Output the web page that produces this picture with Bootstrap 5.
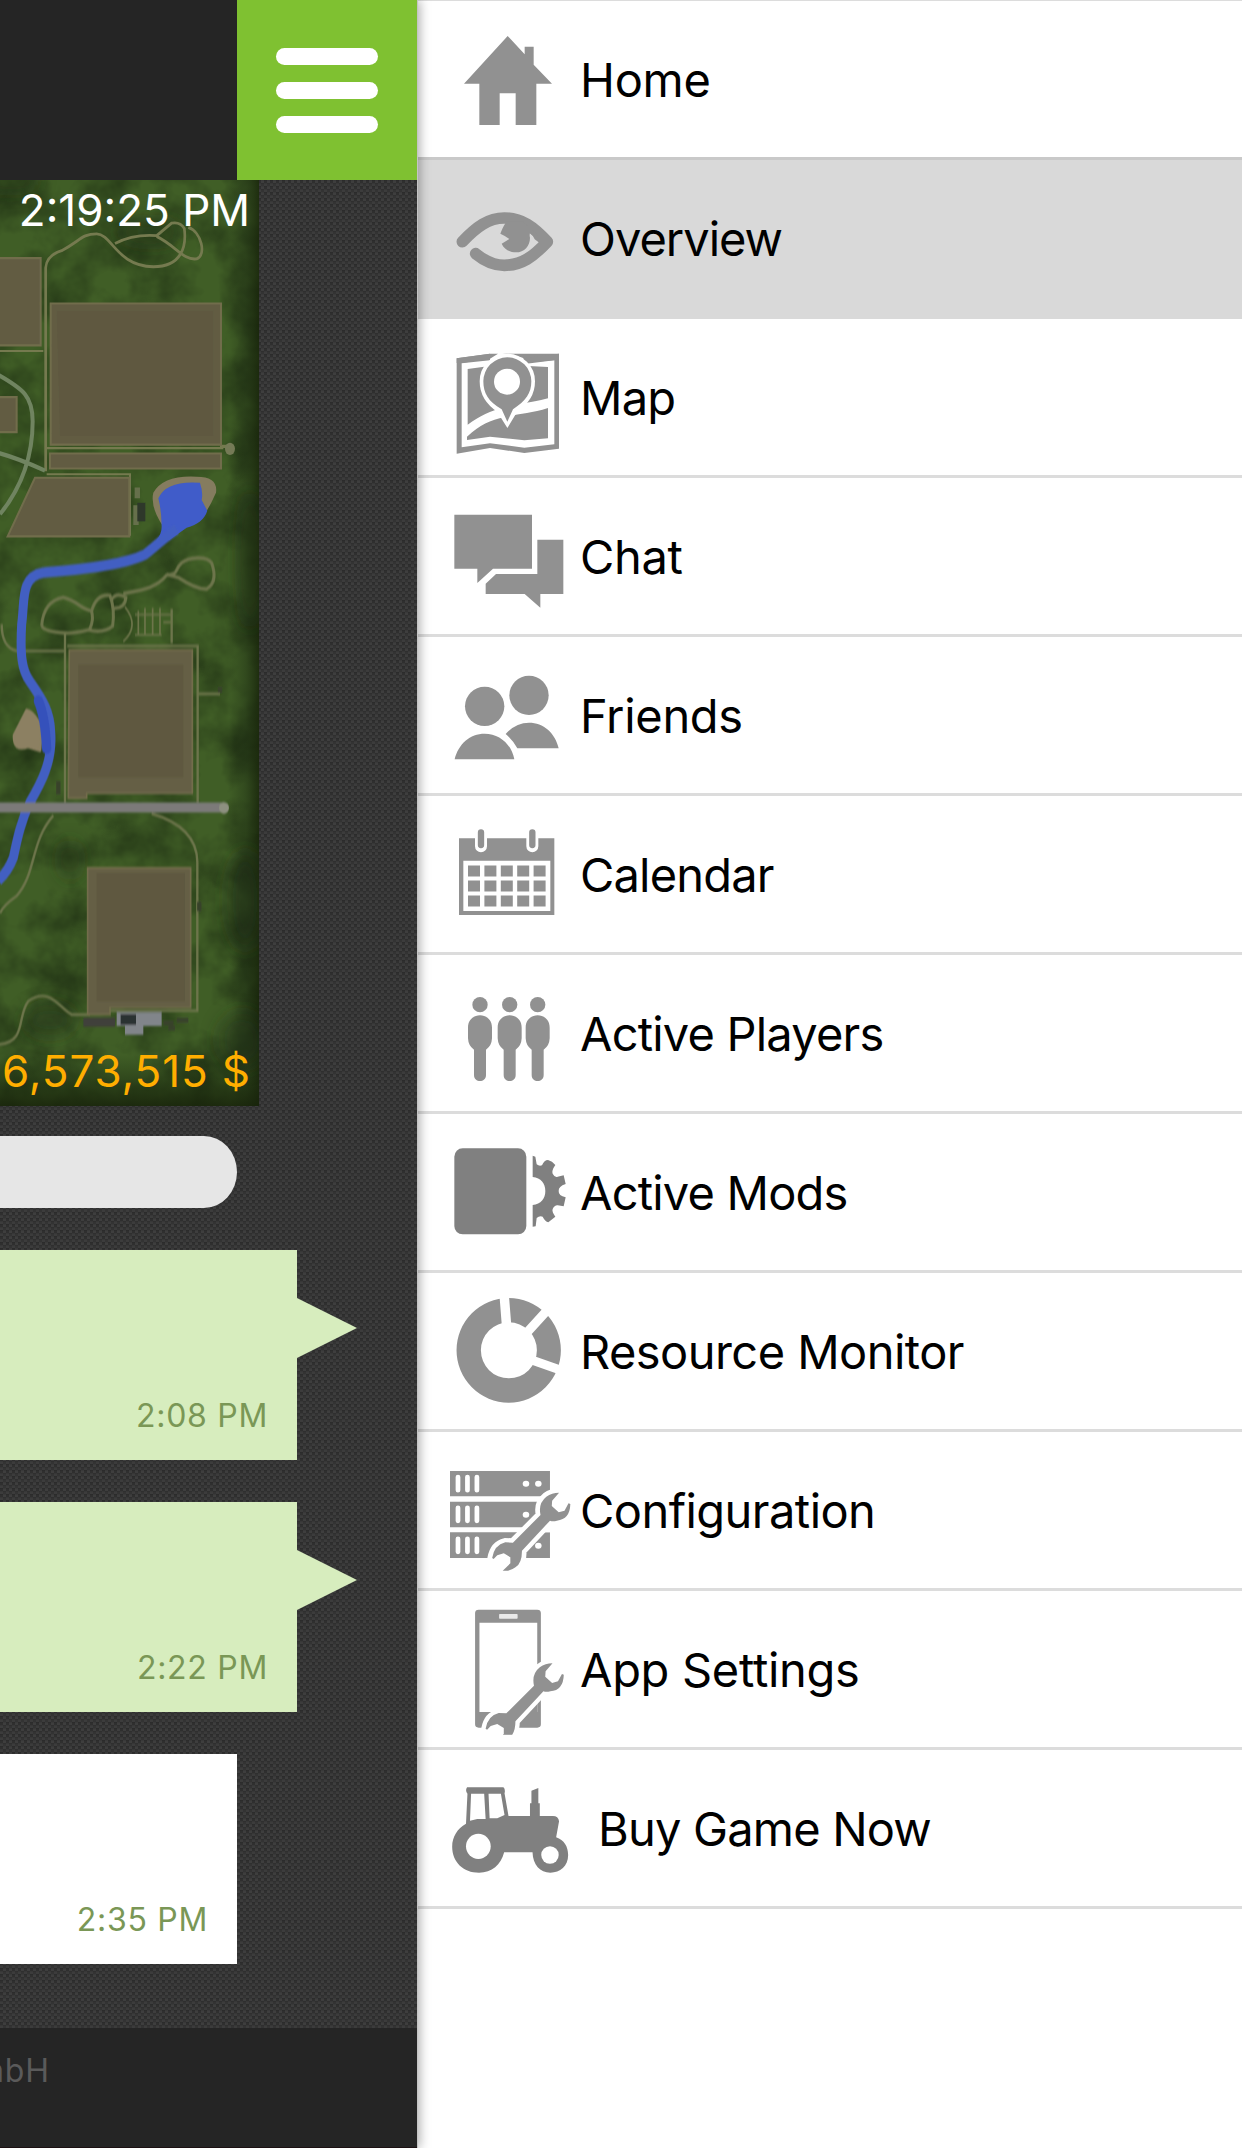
<!DOCTYPE html>
<html lang="en">
<head>
<meta charset="utf-8">
<meta name="viewport" content="width=device-width, initial-scale=1">
<title>Overview</title>
<link rel="stylesheet" href="https://cdn.jsdelivr.net/npm/bootstrap@5.3.0/dist/css/bootstrap.min.css">
<style>
body{font-family:Inter,"Liberation Sans",sans-serif;width:1242px;height:2148px;overflow:hidden;background:#fff}
.app-shell{height:2148px}
.page-pane{width:417px;z-index:2;box-shadow:1px 0 0 #c4c4c4,2px 0 11px rgba(0,0,0,.36);
  background:repeating-linear-gradient(rgba(0,0,0,.08) 0 1px,transparent 1px 3px),
  conic-gradient(#3e3e3e 25%,#333 0 50%,#3c3c3c 0 75%,#2f2f2f 0) 0 0/6px 6px}
.top-strip{height:180px;background:#252525}
.menu-btn{width:180px;height:180px;background:#7fc131;border:0;border-radius:0;gap:17px;padding:0}
.menu-btn span{width:102px;height:17px;border-radius:9px;background:#fff}
.map-view{width:259px;height:926px}
.map-view svg{width:259px;height:926px}
.map-label{font-size:44px;line-height:52px;right:9px}
.map-time{top:4px;color:#fff}
.map-money{bottom:9px;color:#ffae00;letter-spacing:.9px;right:8px}
.search-field{width:237px;height:72px;margin-top:30px;background:#e6e6e6;border-radius:0 33px 33px 0/0 36px 36px 0}
.chat-list{padding-top:42px;gap:42px}
.bubble{width:297px;height:210px;background:#d7edbe;color:#7a9756;font-size:32px;line-height:38px;letter-spacing:.7px;padding:0 29px 25px 0}
.bubble.sent::after{content:"";position:absolute;left:100%;top:48px;width:60px;height:60px;background:#d7edbe;clip-path:polygon(0 0,100% 50%,0 100%)}
.bubble.got{width:237px;background:#fff}
.foot-strip{height:120px;background:#252525;color:#5a5a5a;font-size:32px;line-height:38px;letter-spacing:.9px;border-bottom:1px solid #1d1113}
.foot-strip span{width:50px;margin-top:24px}
.side-menu{border-top:1px solid #dcdcdc}
.side-link{height:159px;border-bottom:3px solid #dcdcdc;padding-left:23px;font-size:47px;line-height:56px;color:#000;letter-spacing:-.8px}
.side-link:first-child{border-bottom-color:#c9c9c9}
.side-link.current{background:#d9d9d9;border-bottom-color:#d9d9d9;letter-spacing:-1px}
.side-link span{padding:2px 0 0 4px}
.side-link svg{width:136px;height:156px;fill:#919191}
.ls-loose{letter-spacing:-.3px}
.ls-mid{letter-spacing:-.55px}
.side-link.buy-link span{padding-left:22px}
</style>
</head>
<body>
<div class="app-shell d-flex">
  <div class="page-pane d-flex flex-column flex-shrink-0 position-relative">
    <header class="top-strip d-flex justify-content-end">
      <button class="menu-btn d-flex flex-column align-items-center justify-content-center" aria-label="Menu"><span></span><span></span><span></span></button>
    </header>
    <section class="map-view position-relative">
      <svg class="d-block" viewBox="0 180 259 926" preserveAspectRatio="none" aria-hidden="true">
        <defs>
          <linearGradient id="edge" x1="0" x2="1" y1="0" y2="0"><stop offset="0" stop-color="#1c2b12" stop-opacity="0"/><stop offset=".55" stop-color="#1c2b12" stop-opacity=".4"/><stop offset="1" stop-color="#162209" stop-opacity=".8"/></linearGradient>
          <linearGradient id="base" x1="0" x2="0" y1="0" y2="1"><stop offset="0" stop-color="#1a2a10" stop-opacity="0"/><stop offset="1" stop-color="#17220a" stop-opacity=".85"/></linearGradient>
          <filter id="grass" x="0" y="0" width="100%" height="100%" color-interpolation-filters="sRGB"><feTurbulence type="fractalNoise" baseFrequency=".022" numOctaves="4" seed="8"/><feColorMatrix values="0 0 0 0 .13  0 0 0 0 .2  0 0 0 0 .08  1.7 0 0 0 -.6"/></filter>
          <filter id="soft"><feGaussianBlur stdDeviation="2.2"/></filter>
          <filter id="haze" x="-50%" y="-50%" width="200%" height="200%"><feGaussianBlur stdDeviation="9"/></filter>
        </defs>
        <rect y="180" width="259" height="926" fill="#405e26"/>
        <rect y="180" width="259" height="926" filter="url(#grass)"/>
        <rect x="229" y="180" width="30" height="926" fill="url(#edge)"/>
        <rect y="1055" width="259" height="51" fill="url(#base)"/>
        <g filter="url(#haze)" fill="#1d2b12" opacity=".5"><ellipse cx="150" cy="232" rx="32" ry="12"/><ellipse cx="10" cy="180" rx="30" ry="10"/><ellipse cx="245" cy="900" rx="18" ry="50"/><ellipse cx="242" cy="1040" rx="24" ry="28"/><ellipse cx="50" cy="1020" rx="26" ry="16"/><ellipse cx="250" cy="560" rx="10" ry="70"/><ellipse cx="70" cy="860" rx="10" ry="20"/></g>
        <g transform="scale(.3333 .3571)">
          <g filter="url(#soft)">
            <g fill="none" stroke="#757a50" stroke-width="8">
              <path d="M137 1320V750Q140 715 185 702C240 675 245 655 290 655C335 655 350 745 460 747C545 747 560 690 553 640Q540 620 515 625L470 660Q400 655 345 682M470 662C530 690 550 730 590 725C620 715 605 650 565 637"/>
              <path d="M0 983H130M137 1255H670M140 1328H390V1500" stroke-width="6"/>
            </g>
            <path d="M660 1250H685" stroke="#757a50" stroke-width="9"/><ellipse cx="690" cy="1257" rx="15" ry="17" fill="#747a56"/>
            <path d="M-5 1050C70 1090 98 1110 98 1180C98 1280 60 1370 0 1440M-5 1268Q60 1285 135 1318" fill="none" stroke="#6f8460" stroke-width="12"/>
            <g fill="#625c43" stroke="#716d4c" stroke-width="6">
              <path d="M-10 723H122V967H-10ZM-10 1112H50V1210H-10ZM152 850H663V1245H152ZM150 1270H663V1312H150ZM105 1338H388V1502H23Z"/>
            </g>
            <path d="M170 870H640V1220H180Z" fill="#5e5940"/>
            <path d="M412 1365V1395M408 1415V1470" stroke="#66704c" stroke-width="16"/><path d="M424 1408V1460" stroke="#2d382c" stroke-width="24"/>
            <path d="M460 1380Q490 1330 590 1335Q655 1335 648 1380Q630 1420 600 1460L490 1475Q450 1420 460 1380Z" fill="#857c5e"/>
            <path d="M475 1395Q500 1345 600 1352Q610 1380 605 1400L622 1430Q610 1465 560 1478L508 1512L470 1512Q485 1495 485 1475Q485 1430 475 1395Z" fill="#3f5bc9"/>
          </g>
        </g>
        <g transform="translate(0 540) scale(.3333 .3827)">
          <g filter="url(#soft)">
            <g fill="none" stroke="#6d754b" stroke-width="7">
              <path d="M195 685V245M195 290H50Q5 280 5 220M202 277H593V685M515 270V180M593 402H660M160 720C90 790 110 870 50 930Q10 955 0 975M455 715Q590 750 592 840V1230H270M0 1318C80 1310 50 1245 85 1205C150 1165 180 1225 215 1240H270"/>
              <path d="M125 225Q130 160 190 150C235 160 240 180 275 185Q290 140 330 145Q345 180 338 225Q310 245 265 235Q220 245 195 243Q135 240 125 225M268 235Q285 205 272 180M335 155Q350 135 378 150Q375 180 340 178M370 140C430 130 470 125 500 92C540 88 520 80 545 60C565 45 620 40 635 60Q655 110 620 128Q590 130 535 98L500 90" stroke-width="9"/>
              <path d="M375 175Q420 225 370 265M415 185V250M435 178V250M458 178V250M480 178V250M405 248H485M405 195H515M490 215H515" stroke-width="5"/>
            </g>
            <path d="M80 445Q105 450 125 495L120 550L85 540Q40 555 42 510Z" fill="#8c8062" stroke="#8c8062" stroke-width="8" stroke-linejoin="round"/>
            <path d="M530 -28C490 -5 470 15 435 38C360 70 200 80 130 85C60 95 75 160 65 220C60 300 65 340 90 370C130 420 150 450 152 500C160 580 120 640 90 685C60 740 50 790 40 830Q25 865 -5 890" fill="none" stroke="#425fc2" stroke-width="27"/>
            <path d="M115 420Q135 460 140 545" stroke="#3551bb" stroke-width="28" fill="none" stroke-linecap="round"/>
            <path d="M0 699H672" stroke="#7b7a79" stroke-width="26"/><circle cx="672" cy="700" r="15" fill="#8d9080"/>
            <g fill="#655f45" stroke="#736d4c" stroke-width="5"><path d="M208 287H577V662H260V675H205ZM263 857H572V1222H330V1240H263Z"/></g>
            <path d="M235 325H550V620H235ZM290 870H555V1205H290Z" fill="#5e5940"/>
            <path d="M250 1260H345" stroke="#3f403a" stroke-width="24"/><path d="M350 1252H485M375 1275H430" stroke="#81858a" stroke-width="36"/><path d="M362 1253H408" stroke="#2b3033" stroke-width="28"/>
            <path d="M490 1262H520M530 1255H565M505 1275H525M660 385V400M175 630V665M598 945V970" stroke="#39432c" stroke-width="13"/>
          </g>
        </g>
      </svg>
      <div class="map-label map-time position-absolute text-nowrap">2:19:25 PM</div>
      <div class="map-label map-money position-absolute text-nowrap">6,573,515 $</div>
    </section>
    <div class="search-field"></div>
    <div class="chat-list d-flex flex-column flex-grow-1">
      <div class="bubble sent position-relative d-flex justify-content-end align-items-end">2:08 PM</div>
      <div class="bubble sent position-relative d-flex justify-content-end align-items-end">2:22 PM</div>
      <div class="bubble got d-flex justify-content-end align-items-end">2:35 PM</div>
    </div>
    <footer class="foot-strip"><span class="d-flex justify-content-end">GmbH</span></footer>
  </div>

  <nav class="side-menu flex-grow-1">
    <a class="side-link ls-loose d-flex align-items-center text-decoration-none" href="#">
      <svg viewBox="90 3 408 468"><path d="M293 108L344 163V140H371V194L426 251H379V375H317V280H269V375H208V251H162Z"/></svg><span>Home</span></a>
    <a class="side-link current d-flex align-items-center text-decoration-none" href="#">
      <svg viewBox="90 480 408 468"><path d="M157 725C200 680 235 654 283 654C335 654 370 680 412 725C370 770 335 796 283 796C250 796 225 784 197 761" fill="none" stroke="#919191" stroke-width="35" stroke-linecap="round" stroke-linejoin="round"/><path d="M290 665C278 680 275 692 271 701Q287 708 298 717L275 731C283 749 300 757 318 757C343 757 360 738 360 713Q358 705 360 699Q371 708 374 718L388 728V710L340 665Z"/></svg><span>Overview</span></a>
    <a class="side-link d-flex align-items-center text-decoration-none" href="#">
      <svg viewBox="90 -3 408 468"><path fill-rule="evenodd" d="M140 115L240 101H447V386L343 399L240 384L140 401ZM155 130V382L240 370L343 383L433 373V121L343 132L240 121Z"/><path d="M264 96L340 114V124L240 128V96Z" fill="#fff"/><path d="M140 115L240 101H264L240 116L155 129H140ZM342 115L447 101V119L345 128Z"/><path d="M173 147L245 137H340L414 141V235C350 252 320 250 285 262C240 272 210 288 173 314ZM171 350C210 315 240 300 285 292C325 280 365 280 414 264V355L343 361L240 350L171 360Z"/><path d="M292 303L270 268C235 245 220 220 220 184A72 72 0 0 1 364 184C364 220 348 242 313 268Z" stroke="#fff" stroke-width="22" fill="#fff"/><path d="M292 305L275 268C235 245 220 220 220 184A72 72 0 0 1 364 184C364 220 348 242 309 268Z"/><circle cx="291" cy="185" r="39" fill="#fff"/></svg><span>Map</span></a>
    <a class="side-link ls-loose d-flex align-items-center text-decoration-none" href="#">
      <svg viewBox="90 474 408 468"><path d="M133 584H366V746H249L202 789V746H133ZM382 659H460V822H391V863L344 822H227V791L258 762H382Z"/></svg><span>Chat</span></a>
    <a class="side-link ls-loose d-flex align-items-center text-decoration-none" href="#">
      <svg viewBox="90 -9 408 468"><circle cx="224" cy="199" r="59"/><circle cx="357" cy="166" r="59"/><path d="M134 358C145 312 180 281 224 281C268 281 304 312 313 358ZM287 282Q317 248 357 248C400 248 436 279 446 325H322Q307 299 287 282Z"/></svg><span>Friends</span></a>
    <a class="side-link d-flex align-items-center text-decoration-none" href="#">
      <svg viewBox="90 468 408 468"><path fill-rule="evenodd" d="M147 595H433V825H147ZM160 662V813H421V662Z"/><path d="M213 580V619M367 580V619" stroke="#fff" stroke-width="36" stroke-linecap="round"/><path d="M213 577V615M367 577V615" stroke="#919191" stroke-width="19" stroke-linecap="round"/><path d="M174 693H407M174 738H407M174 783H407" fill="none" stroke="#919191" stroke-width="33" stroke-dasharray="36 13.2"/></svg><span>Calendar</span></a>
    <a class="side-link d-flex align-items-center text-decoration-none" href="#">
      <svg viewBox="90 -15 408 468"><defs><g id="person"><circle cx="210" cy="134" r="23"/><path d="M174 203C174 178 192 166 210 166C228 166 246 178 246 203V235Q245 258 228 269V345C228 369 192 369 192 345V269Q175 258 174 235Z"/></g></defs><use href="#person"/><use href="#person" x="89"/><use href="#person" x="173"/></svg><span>Active Players</span></a>
    <a class="side-link d-flex align-items-center text-decoration-none" href="#">
      <svg viewBox="90 462 408 468"><g fill="#808080"><rect x="133" y="565" width="216" height="258" rx="25"/><path d="M368 587L376 590L380 613Q388 620 396 616Q403 600 414 600Q427 603 436 615Q424 632 428 641Q435 654 443 650L461 646L467 672Q445 679 446 693Q445 707 467 712L461 739L443 736Q434 735 428 747Q425 755 436 770L415 787Q405 784 398 770Q388 767 380 774L377 799L368 800V735C393 733 406 715 406 693C406 671 393 653 368 651Z"/></g></svg><span>Active Mods</span></a>
    <a class="side-link ls-mid d-flex align-items-center text-decoration-none" href="#">
      <svg viewBox="82.5 9 374.1 468" preserveAspectRatio="none"><path fill-rule="evenodd" d="M128 241A143.500 157 0 1 1 415 241A143.500 157 0 1 1 128 241ZM195 241A77 84 0 1 0 349 241A77 84 0 1 0 195 241Z"/><path d="M266 172L259 75M318 192L380 118M330 268L418 302" stroke="#fff" stroke-width="26"/></svg><span>Resource Monitor</span></a>
    <a class="side-link ls-mid d-flex align-items-center text-decoration-none" href="#">
      <svg viewBox="82.5 486 374.1 468" preserveAspectRatio="none"><defs><path id="wrench" d="M410 668L391 692L390 708L409 727L425 722L436 700L441 702Q440 748 404 752Q393 755 385 752L308 842Q308 880 290 892Q275 905 255 902L276 880V862L258 850L240 856L230 867L226 864Q232 825 262 817L283 818L359 735Q352 700 375 680Q390 668 410 668Z"/></defs><path d="M110 603H385V679H110ZM110 695H385V772H110ZM110 787H385V864H110Z"/><g stroke="#fff" stroke-width="13" stroke-linecap="round"><path d="M132 621V661M158 621V661M184 621V661M132 713V753M158 713V753M184 713V753M132 806V846M158 806V846M184 806V846"/></g><g fill="#fff"><circle cx="319" cy="641" r="9"/><circle cx="353" cy="641" r="9"/><circle cx="319" cy="734" r="9"/><circle cx="353" cy="827" r="9"/></g><use href="#wrench" stroke="#fff" stroke-width="26"/><path d="M348 772L385 735V787H340ZM240 864L305 864V870H235Z" fill="#fff"/><use href="#wrench"/></svg><span>Configuration</span></a>
    <a class="side-link ls-loose d-flex align-items-center text-decoration-none" href="#">
      <svg viewBox="82.5 3 374.1 468" preserveAspectRatio="none"><defs><clipPath id="cut"><rect x="80" y="0" width="380" height="434"/></clipPath></defs><path fill-rule="evenodd" d="M189 59H350Q360 59 360 69V403Q360 413 350 413H189Q179 413 179 403V69Q179 59 189 59ZM191 98V366H350V98Z"/><rect x="245" y="72" width="51" height="14" fill="#fff" rx="2" opacity=".8"/><path d="M350 330L322 366H350Z"/><g clip-path="url(#cut)"><use href="#wrench" x="-18" y="-448" stroke="#fff" stroke-width="24"/><use href="#wrench" x="-18" y="-448"/></g></svg><span>App Settings</span></a>
    <a class="side-link buy-link d-flex align-items-center text-decoration-none" href="#">
      <svg viewBox="82.500 480 374.1 468" preserveAspectRatio="none"><g fill="#808080"><path fill-rule="evenodd" d="M157 592H257Q263 598 260 610L271 678H330V640H334V602L353 594V640H357V678H393Q408 678 410 694L402 742C424 750 435 770 435 795C435 828 413 848 386 848C358 848 338 825 337 787H259C250 825 225 848 190 848C146 848 116 815 116 770C116 740 130 716 154 701L158 611Q151 602 157 592ZM168 611L165 692L185 687H208L204 611ZM216 611L219 685H240L260 675L250 611Z"/></g><ellipse cx="188" cy="769" rx="34" ry="38" fill="#fff"/><ellipse cx="385" cy="795" rx="24" ry="26" fill="#fff"/></svg><span>Buy Game Now</span></a>
  </nav>
</div>
<script src="https://cdn.jsdelivr.net/npm/bootstrap@5.3.0/dist/js/bootstrap.bundle.min.js"></script>
</body>
</html>
